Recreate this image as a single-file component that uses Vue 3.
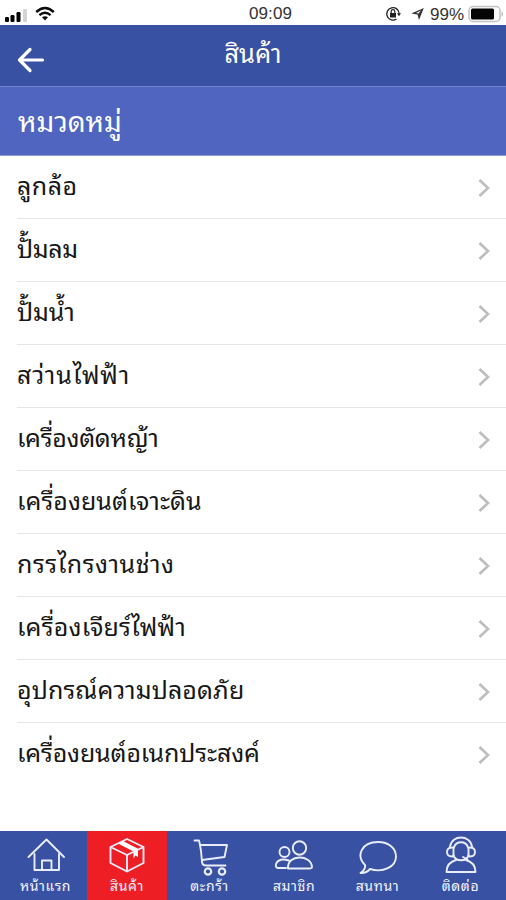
<script setup>
const items = [
  { label: 'ลูกล้อ', tracking: 0.5 },
  { label: 'ปั้มลม', tracking: -0.4 },
  { label: 'ปั้มน้ำ', tracking: -0.2 },
  { label: 'สว่านไฟฟ้า', tracking: 0.85 },
  { label: 'เครื่องตัดหญ้า', tracking: -0.3 },
  { label: 'เครื่องยนต์เจาะดิน', tracking: 0.05 },
  { label: 'กรรไกรงานช่าง', tracking: 0.5 },
  { label: 'เครื่องเจียร์ไฟฟ้า', tracking: 0.2 },
  { label: 'อุปกรณ์ความปลอดภัย', tracking: 0.1 },
  { label: 'เครื่องยนต์อเนกประสงค์', tracking: -0.15 },
]
const tabs = [
  { id: 'home', label: 'หน้าแรก' },
  { id: 'product', label: 'สินค้า' },
  { id: 'cart', label: 'ตะกร้า' },
  { id: 'member', label: 'สมาชิก' },
  { id: 'chat', label: 'สนทนา' },
  { id: 'contact', label: 'ติดต่อ' },
]
</script>

<template>
  <div class="screen">
    <div class="status">
      <div class="side">
        <svg class="signal" width="24" height="16" viewBox="0 0 24 16">
          <rect x="0" y="9" width="4" height="5" rx="1.2" />
          <rect x="5.5" y="7" width="4" height="7" rx="1.2" />
          <rect x="11.5" y="4" width="4" height="10" rx="1.2" />
          <rect x="18" y="1" width="4" height="13" rx="1.2" fill="#d3d3d3" />
        </svg>
        <svg class="wifi" width="20" height="16" viewBox="0 0 20 16" fill="none" stroke="#0c0c0c" stroke-width="2.4">
          <path d="M1.2 6 Q10 -2 18.8 6" />
          <path d="M4.4 9.2 Q10 4.200 15.600 9.200" />
          <path d="M7 11.300 Q10 9 13 11.300 L10 14.400 Z" fill="#0c0c0c" stroke="none" />
        </svg>
      </div>
      <div class="time">09:09</div>
      <div class="side right">
        <svg width="16" height="16" viewBox="0 0 16 16" fill="none" stroke="#222">
          <path d="M14.200 7.500 A6.200 6.200 0 1 0 11.500 13" stroke-width="1.300" />
          <path d="M12 7.200 h4 l-2 3z" fill="#222" stroke="none" />
          <rect x="5" y="7" width="6" height="4.500" fill="#222" stroke="none" />
          <path d="M6.200 7 V5.500 a1.800 1.800 0 0 1 3.600 0 V7" stroke-width="1.200" />
        </svg>
        <svg class="loc" width="13" height="14" viewBox="0 0 13 14">
          <path d="M12.800 1 L8 13 L6.500 7.500 L0.300 6.500 Z M10 3.500 L5 5.900 L7.500 6.500 Z" fill="#333" fill-rule="evenodd" />
        </svg>
        <span class="pct">99%</span>
        <svg class="battery" width="37" height="18" viewBox="0 0 37 18">
          <rect x="1" y="1.500" width="31" height="15" rx="4" fill="#fff" stroke="#c3c3c3" stroke-width="1.500" />
          <rect x="3" y="3.500" width="23" height="11" rx="1.500" fill="#050505" />
          <path d="M33.500 6 q3.200 3 0 6z" fill="#bdbdbd" />
        </svg>
      </div>
    </div>

    <header class="bar">
      <svg class="back" width="28" height="26" viewBox="0 0 28 26" fill="none" stroke="#fff" stroke-width="3.200" stroke-linecap="round" stroke-linejoin="round">
        <path d="M25.500 13 H2.500 M13 2.500 L2.500 13 L13 23.500" />
      </svg>
      <h1>สินค้า</h1>
    </header>

    <h2 class="section">หมวดหมู่</h2>

    <ul class="list">
      <li v-for="item in items" :key="item.label">
        <span :style="{ letterSpacing: item.tracking + 'px' }">{{ item.label }}</span>
        <svg width="12" height="20" viewBox="0 0 12 20" fill="none" stroke="#bdbdbd" stroke-width="2.600">
          <path d="M1.500 2 L10 10 L1.500 18" />
        </svg>
      </li>
    </ul>

    <nav class="tabs">
      <div v-for="t in tabs" :key="t.id" class="tab" :class="{ active: t.id === 'product' }">
        <svg width="40" height="40" viewBox="0 0 40 40" fill="none" stroke="#e9edfb" stroke-width="1.900" stroke-linecap="round" stroke-linejoin="round">
          <template v-if="t.id === 'home'">
            <path d="M2.500 21 L20.500 3.500 L38 21" />
            <path d="M8.500 18 V34 H16 V24.500 H25.500 V34 H33 V18 M16 34 H25.500" />
          </template>
          <template v-else-if="t.id === 'product'">
            <path d="M3.500 11 L20 3 L36.500 11 V27 L20 35.500 L3.500 27 Z M3.500 11 L20 19 L36.500 11 M20 19 V35.500" />
            <path d="M11 7.500 L16 5 L31 12.800 V21 L28.500 19.500 L26.500 22.500 V15.500 Z" fill="#fff" stroke="none" />
          </template>
          <template v-else-if="t.id === 'cart'">
            <path d="M4.500 4.500 H9 Q10 8 11 15 L12 26 Q12.500 29.500 16 29.500 H35.500" />
            <path d="M10 9 H37 L34.500 21 L12 24" />
            <circle cx="18" cy="35.500" r="3.200" stroke-width="2.200" />
            <circle cx="32" cy="35.500" r="3.200" stroke-width="2.200" />
          </template>
          <template v-else-if="t.id === 'member'">
            <circle cx="25.500" cy="12" r="6.700" />
            <path d="M14 32.500 C13 18 37 18 38 31 Q38 32.500 35 32.500 Z" />
            <circle cx="10.500" cy="16" r="5" />
            <path d="M12 32 H4 C0 32 1 23 10.500 23.500 L15 24.500" />
          </template>
          <template v-else-if="t.id === 'chat'">
            <path d="M7 29 C-2 20 3 6 20 6 C31 6 38 12.500 38 20.500 C38 31 25 37 12 33 Q8 37.500 2.500 37 Q8 33 7 29 Z" />
          </template>
          <template v-else>
            <path d="M9 10.500 C11 -1.500 29 -1.500 31 10.500 M13 11.500 C15 4.500 25 4.500 27 11.500" />
            <path d="M12.500 11.500 Q6 11 6 16 Q6 20.500 11 20.500 L12.500 20 Z M27.500 11.500 Q34 11 34 16 Q34 20.500 29 20.500 L27.500 20 Z" />
            <path d="M12.500 19 C14 26 26 26 27.500 19 M22 21 L26.500 23.500" />
            <path d="M15 24 C8 26 5.500 30 5.500 36 H34.500 C34.500 30 32 26 25 24" />
          </template>
        </svg>
        <span>{{ t.label }}</span>
      </div>
    </nav>
  </div>
</template>

<style>
body {
  margin: 0;
  background: #fff;
}
</style>

<style scoped>
.screen {
  width: 506px;
  height: 900px;
  display: flex;
  flex-direction: column;
  overflow: hidden;
  background: #fff;
  color: #171717;
  font-family: "Noto Sans Thai Looped", "Noto Looped Thai", Loma, Waree, Garuda, Umpush, "Droid Sans Thai", Tahoma, "Noto Sans Thai", "Noto Sans", sans-serif;
}
.status {
  height: 25px;
  flex: none;
  display: grid;
  grid-template-columns: 1fr auto 1fr;
  padding: 0 1px 0 5px;
  font-family: "Liberation Sans", sans-serif;
  font-size: 17px;
  line-height: 27px;
  color: #333;
}
.side {
  display: flex;
  align-items: center;
  padding-top: 3px;
  height: 22px;
}
.signal {
  margin-top: 4px;
}
.wifi {
  margin-left: 6px;
}
.right {
  justify-content: flex-end;
}
.time {
  padding-left: 31px;
  letter-spacing: 0.1px;
}
.loc {
  margin-left: 10px;
}
.pct {
  margin: 1px 4px 0 6px;
}
.bar {
  height: 61px;
  flex: none;
  display: grid;
  grid-template-columns: 60px 1fr 60px;
  align-items: center;
  background: #3951a2;
  border-bottom: 1px solid #7181ca;
}
.back {
  margin: 8px 0 0 17px;
}
h1 {
  margin: 0;
  padding-bottom: 7px;
  color: #fff;
  font-size: 25.5px;
  font-weight: 400;
  line-height: 54px;
  text-align: center;
}
.section {
  height: 69px;
  flex: none;
  box-sizing: border-box;
  margin: 0;
  padding-left: 18px;
  background: #5065c0;
  border-bottom: 1px solid #8a98d4;
  color: #fff;
  font-size: 28px;
  font-weight: 400;
  line-height: 65px;
}
.list {
  flex: 1;
  margin: 0;
  padding: 0 0 0 17px;
  list-style: none;
}
li {
  height: 63px;
  box-sizing: border-box;
  display: flex;
  align-items: center;
  justify-content: space-between;
  padding-right: 16px;
  border-bottom: 1px solid #e6e6e6;
  font-size: 25px;
  line-height: 54px;
  white-space: nowrap;
}
li span {
  padding-bottom: 6px;
}
li svg {
  margin-top: 1px;
}
li:last-child {
  border-bottom-color: transparent;
}
.tabs {
  height: 69px;
  flex: none;
  box-sizing: border-box;
  display: grid;
  grid-template-columns: 83px 80px 85px 84px 83px 83px;
  padding: 0 4px;
  background: #3951a2;
}
.tab {
  display: flex;
  flex-direction: column;
  align-items: center;
  padding-top: 5px;
  color: #f3f5ff;
  font-size: 14px;
  letter-spacing: 0.6px;
  line-height: 18px;
}
.tab.active {
  background: #ee1e25;
}
.tab svg {
  flex: none;
}
</style>
